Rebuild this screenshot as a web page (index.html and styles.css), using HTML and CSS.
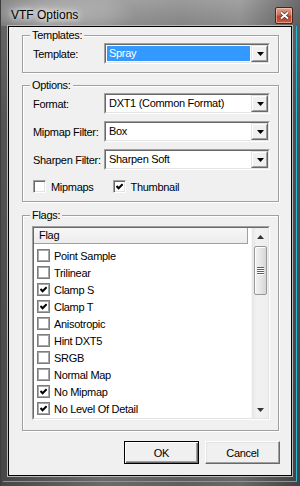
FILE: index.html
```html
<!DOCTYPE html>
<html>
<head>
<meta charset="utf-8">
<link rel="stylesheet" href="styles.css">
</head>
<body>
<div class="window">
  <div class="titlebar">
    <span class="title">VTF Options</span>
    <div class="close">
      <svg width="11" height="9" viewBox="0 0 11 9">
        <path d="M2 1.5 L9 7.5 M9 1.5 L2 7.5" stroke="#3a3a4a" stroke-width="3.4" fill="none"/>
        <path d="M2 1.5 L9 7.5 M9 1.5 L2 7.5" stroke="#ffffff" stroke-width="1.8" fill="none"/>
      </svg>
    </div>
  </div>
  <div class="frame">
    <div class="client">
      <div class="group g-templates">
        <div class="group-title">Templates:</div>
        <div class="row first">
          <span class="label">Template:</span>
          <div class="combo"><div class="combo-in">
            <div class="field"><span class="ftext selected">Spray</span></div>
            <div class="dd"><div class="dd-in"><svg width="7" height="4" viewBox="0 0 7 4"><polygon points="0,0 7,0 3.5,4" fill="#000"/></svg></div></div>
          </div></div>
        </div>
      </div>

      <div class="group g-options">
        <div class="group-title">Options:</div>
        <div class="row first">
          <span class="label">Format:</span>
          <div class="combo"><div class="combo-in">
            <div class="field"><span class="ftext">DXT1 (Common Format)</span></div>
            <div class="dd"><div class="dd-in"><svg width="7" height="4" viewBox="0 0 7 4"><polygon points="0,0 7,0 3.5,4" fill="#000"/></svg></div></div>
          </div></div>
        </div>
        <div class="row">
          <span class="label">Mipmap Filter:</span>
          <div class="combo"><div class="combo-in">
            <div class="field"><span class="ftext">Box</span></div>
            <div class="dd"><div class="dd-in"><svg width="7" height="4" viewBox="0 0 7 4"><polygon points="0,0 7,0 3.5,4" fill="#000"/></svg></div></div>
          </div></div>
        </div>
        <div class="row">
          <span class="label">Sharpen Filter:</span>
          <div class="combo"><div class="combo-in">
            <div class="field"><span class="ftext">Sharpen Soft</span></div>
            <div class="dd"><div class="dd-in"><svg width="7" height="4" viewBox="0 0 7 4"><polygon points="0,0 7,0 3.5,4" fill="#000"/></svg></div></div>
          </div></div>
        </div>
        <div class="checks">
          <div class="check c-mip"><span class="cb"></span><span class="clabel">Mipmaps</span></div>
          <div class="check c-thumb"><span class="cb"><svg width="7" height="7" viewBox="0 0 7 7"><path d="M0.5 3 L2.6 5.2 L6.6 1.2" stroke="#000" stroke-width="2" fill="none"/></svg></span><span class="clabel">Thumbnail</span></div>
        </div>
      </div>

      <div class="group g-flags">
        <div class="group-title">Flags:</div>
        <div class="list"><div class="list-in">
          <div class="list-main">
            <div class="lhead">Flag</div>
            <div class="rows">
              <div class="lrow"><span class="lcb"></span><span class="ltext">Point Sample</span></div>
              <div class="lrow"><span class="lcb"></span><span class="ltext">Trilinear</span></div>
              <div class="lrow"><span class="lcb"><svg width="7" height="7" viewBox="0 0 7 7"><path d="M0.5 3 L2.6 5.2 L6.6 1.2" stroke="#000" stroke-width="2" fill="none"/></svg></span><span class="ltext">Clamp S</span></div>
              <div class="lrow"><span class="lcb"><svg width="7" height="7" viewBox="0 0 7 7"><path d="M0.5 3 L2.6 5.2 L6.6 1.2" stroke="#000" stroke-width="2" fill="none"/></svg></span><span class="ltext">Clamp T</span></div>
              <div class="lrow"><span class="lcb"></span><span class="ltext">Anisotropic</span></div>
              <div class="lrow"><span class="lcb"></span><span class="ltext">Hint DXT5</span></div>
              <div class="lrow"><span class="lcb"></span><span class="ltext">SRGB</span></div>
              <div class="lrow"><span class="lcb"></span><span class="ltext">Normal Map</span></div>
              <div class="lrow"><span class="lcb"><svg width="7" height="7" viewBox="0 0 7 7"><path d="M0.5 3 L2.6 5.2 L6.6 1.2" stroke="#000" stroke-width="2" fill="none"/></svg></span><span class="ltext">No Mipmap</span></div>
              <div class="lrow"><span class="lcb"><svg width="7" height="7" viewBox="0 0 7 7"><path d="M0.5 3 L2.6 5.2 L6.6 1.2" stroke="#000" stroke-width="2" fill="none"/></svg></span><span class="ltext">No Level Of Detail</span></div>
            </div>
          </div>
          <div class="vscroll">
            <div class="sarrow"><svg width="7" height="4" viewBox="0 0 7 4"><polygon points="0,4 7,4 3.5,0" fill="#333"/></svg></div>
            <div class="thumb">
              <span class="grip"></span><span class="grip"></span><span class="grip"></span><span class="grip"></span>
            </div>
            <div class="strack"></div>
            <div class="sarrow"><svg width="7" height="4" viewBox="0 0 7 4"><polygon points="0,0 7,0 3.5,4" fill="#333"/></svg></div>
          </div>
        </div></div>
      </div>

      <div class="buttons">
        <div class="btn default">OK</div>
        <div class="btn">Cancel</div>
      </div>
    </div>
  </div>
</div>
</body>
</html>
```
FILE: styles.css
```css
* { box-sizing: border-box; }
html, body { margin: 0; padding: 0; }
body {
  width: 300px;
  height: 486px;
  overflow: hidden;
  font-family: "Liberation Sans", Arial, sans-serif;
  font-size: 11px;
  letter-spacing: -0.3px;
  color: #000;
  background: #555;
}
.window {
  width: 300px;
  height: 486px;
  display: flex;
  flex-direction: column;
  background:
    linear-gradient(to right, rgba(0,0,0,0.25), rgba(255,255,255,0.08) 35%, rgba(0,0,0,0) 60%, rgba(255,255,255,0.06) 80%, rgba(0,0,0,0.3)),
    linear-gradient(to bottom, #9b9b9b 0, #848484 26px, #6e6e6e 120px, #5e5e5e 100%);
  border-left: 1px solid #3c3c3c;
}
.titlebar {
  height: 26px;
  flex: none;
  display: flex;
  align-items: flex-start;
  padding-left: 10px;
  background: radial-gradient(ellipse 90px 26px at 45px 14px, rgba(255,255,255,0.45), rgba(255,255,255,0) 100%);
}
.title {
  margin-top: 8px;
  font-family: "Liberation Sans", Arial, sans-serif;
  font-size: 12px;
  letter-spacing: 0;
  line-height: 14px;
  color: #000;
  text-shadow: 0 0 5px #fff, 0 0 9px #fff;
}
.close {
  margin-left: auto;
  margin-right: 7px;
  margin-top: 7px;
  width: 18px;
  height: 17px;
  border: 1px solid #4a2620;
  border-radius: 2px;
  background: linear-gradient(to bottom, #e8a08c 0, #d0705a 45%, #b8402a 55%, #c85a40 100%);
  box-shadow: inset 0 0 0 1px rgba(255,220,210,0.5);
  display: flex;
  align-items: center;
  justify-content: center;
}
.frame {
  flex: 1;
  display: flex;
  flex-direction: column;
  margin: 0 3px 4px 2px;
  padding: 0 4px 5px 5px;
  border-right: 1px solid #29b9d6;
  border-bottom: 1px solid #29b9d6;
}
.client {
  flex: 1;
  display: flex;
  flex-direction: column;
  border: 1px solid #000;
  box-shadow: 0 0 0 1px #b9b9b9;
  background: #f0f0f0;
  padding: 8px 11px 11px 13px;
}
.group {
  border: 1px solid #a0a0a0;
  box-shadow: inset 1px 1px 0 #fff, 1px 1px 0 #fff;
  margin-right: 1px;
  padding: 0 8px 8px 10px;
}
.group-title {
  width: fit-content;
  margin: -7px 0 0 -3px;
  padding: 0 2px;
  height: 13px;
  line-height: 13px;
  background: #f0f0f0;
}
.g-options { margin-top: 12px; }
.g-flags { margin-top: 13px; padding: 0 8px 10px 9px; }
.g-flags .group-title { margin-left: -2px; }
.row {
  display: flex;
  align-items: center;
  height: 21px;
  margin-top: 7px;
}
.row.first { margin-top: 1px; }
.label { width: 71px; flex: none; }
.combo {
  width: 166px;
  height: 21px;
  border: 1px solid;
  border-color: #a0a0a0 #fff #fff #a0a0a0;
}
.combo-in {
  height: 100%;
  display: flex;
  border: 1px solid;
  border-color: #696969 #e3e3e3 #e3e3e3 #696969;
  background: #fff;
}
.field {
  flex: 1;
  padding: 1px;
  display: flex;
}
.ftext {
  flex: 1;
  padding-left: 2px;
  line-height: 15px;
}
.ftext.selected { background: #3399ff; color: #fff; }
.dd {
  width: 17px;
  height: 17px;
  flex: none;
  border: 1px solid;
  border-color: #e3e3e3 #696969 #696969 #e3e3e3;
}
.dd-in {
  height: 100%;
  border: 1px solid;
  border-color: #fff #a0a0a0 #a0a0a0 #fff;
  background: #f0f0f0;
  display: flex;
  align-items: center;
  justify-content: center;
}
.dd-in svg { display: block; margin-left: 1px; }
.checks {
  display: flex;
  align-items: center;
  height: 13px;
  margin-top: 10px;
}
.check { display: flex; align-items: center; }
.c-thumb { margin-left: 19px; }
.cb {
  width: 13px;
  height: 13px;
  flex: none;
  border: 1px solid;
  border-color: #a0a0a0 #fff #fff #a0a0a0;
  box-shadow: inset 1px 1px 0 #696969, inset -1px -1px 0 #e3e3e3;
  background: #fff;
  display: flex;
  align-items: center;
  justify-content: center;
}
.cb svg, .lcb svg { display: block; }
.clabel { margin-left: 5px; }
.c-thumb .clabel { margin-left: 5px; }
.list {
  margin-top: 4px;
  height: 194px;
  border: 1px solid;
  border-color: #a0a0a0 #fff #fff #a0a0a0;
}
.list-in {
  height: 100%;
  display: flex;
  border: 1px solid;
  border-color: #696969 #e3e3e3 #e3e3e3 #696969;
  background: #fff;
}
.list-main { flex: 1; }
.lhead {
  width: 214px;
  height: 16px;
  line-height: 15px;
  padding-left: 5px;
  background: linear-gradient(#f7f7f7, #ececec);
  border-bottom: 1px solid #a0a0a0;
  border-right: 1px solid #a0a0a0;
}
.rows { padding-top: 3px; }
.lrow {
  height: 17px;
  display: flex;
  align-items: center;
  padding-left: 3px;
}
.lcb {
  width: 13px;
  height: 13px;
  flex: none;
  border: 1px solid #7d7d7d;
  box-shadow: inset 0 0 0 1px #a8a8a8;
  background: #fff;
  display: flex;
  align-items: center;
  justify-content: center;
}
.ltext { margin-left: 4px; }
.vscroll {
  width: 17px;
  flex: none;
  display: flex;
  flex-direction: column;
  align-items: center;
  background: linear-gradient(to right, #e6e6e6, #f2f2f2 30%, #eeeeee);
  border-left: 1px solid #f8f8f8;
}
.sarrow {
  height: 17px;
  width: 100%;
  flex: none;
  display: flex;
  align-items: center;
  justify-content: center;
}
.thumb {
  margin-top: 1px;
  width: 13px;
  height: 49px;
  flex: none;
  border: 1px solid #979797;
  border-radius: 2px;
  background: linear-gradient(to right, #f3f3f3, #e6e6e6 50%, #d6d6d6);
  box-shadow: inset 1px 1px 0 #fff;
  display: flex;
  flex-direction: column;
  align-items: center;
  justify-content: center;
  gap: 1px;
}
.grip {
  width: 7px;
  height: 1px;
  background: #606060;
  box-shadow: 0 1px 0 #fff;
}
.strack { flex: 1; }
.buttons {
  margin-top: 10px;
  display: flex;
  justify-content: flex-end;
  gap: 6px;
}
.btn {
  width: 75px;
  height: 23px;
  display: flex;
  align-items: center;
  justify-content: center;
  background: #f0f0f0;
  border: 1px solid;
  border-color: #fff #696969 #696969 #fff;
  box-shadow: inset -1px -1px 0 #a0a0a0, inset 1px 1px 0 #e3e3e3;
}
.btn.default {
  border: 1px solid #000;
  box-shadow: inset 1px 1px 0 #fff, inset -1px -1px 0 #696969, inset -2px -2px 0 #a0a0a0;
}
```
